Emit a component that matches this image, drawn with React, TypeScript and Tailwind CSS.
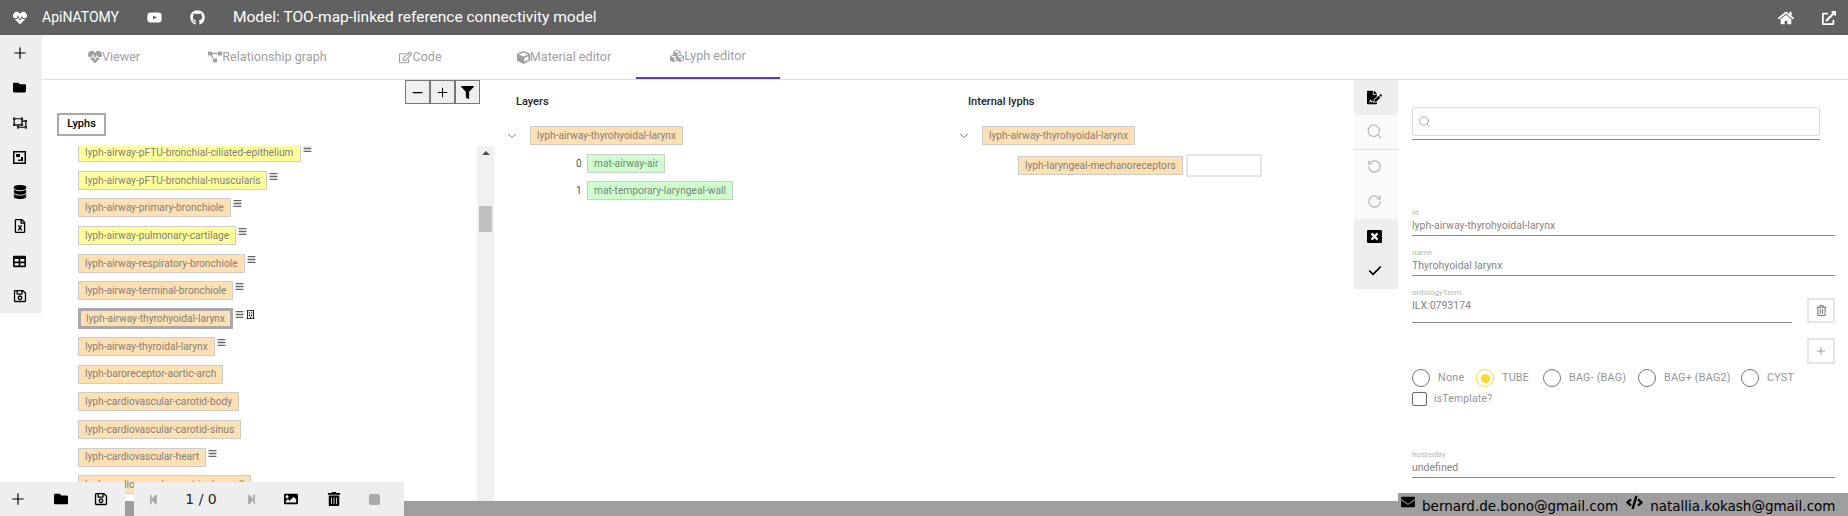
import {
  FaBars, FaCode, FaCube, FaCubes, FaDatabase, FaEnvelope, FaExternalLinkAlt, FaFileSignature, FaFilter,
  FaFolder, FaGithub, FaHeartbeat, FaHome, FaImage, FaProjectDiagram,
  FaStepBackward, FaStepForward, FaTable, FaTrashAlt, FaWindowClose, FaYoutube, FaRegBuilding, FaRegEdit, FaRegFileExcel, FaRegObjectUngroup, FaRegSave, FaRegTrashAlt,
} from "react-icons/fa"
import { Check, ChevronDown, Minus, Plus, RotateCcw, RotateCw, Search } from "lucide-react"
import type { ReactNode } from "react"

const LYPHS = [
    { name: "lyph-airway-pFTU-bronchial-ciliated-epithelium", mat: true, menu: true },
    { name: "lyph-airway-pFTU-bronchial-muscularis", mat: true, menu: true },
    { name: "lyph-airway-primary-bronchiole", menu: true },
    { name: "lyph-airway-pulmonary-cartilage", mat: true, menu: true },
    { name: "lyph-airway-respiratory-bronchiole", menu: true },
    { name: "lyph-airway-terminal-bronchiole", menu: true },
    { name: "lyph-airway-thyrohyoidal-larynx", menu: true, selected: true },
    { name: "lyph-airway-thyroidal-larynx", menu: true },
    { name: "lyph-baroreceptor-aortic-arch" },
    { name: "lyph-cardiovascular-carotid-body" },
    { name: "lyph-cardiovascular-carotid-sinus" },
    { name: "lyph-cardiovascular-heart", menu: true },
    { name: "lyph-cardiovascular-ventricular-wall" },
]

const TABS = [
    { label: "Viewer", icon: <FaHeartbeat size={14} />, w: "w-[144px]" },
    { label: "Relationship graph", icon: <FaProjectDiagram size={14} />, w: "w-[163px]" },
    { label: "Code", icon: <FaRegEdit size={13} />, w: "w-[143px]" },
    { label: "Material editor", icon: <FaCube size={13} />, w: "w-[144px]" },
    { label: "Lyph editor", icon: <FaCubes size={14} />, w: "w-[144px]", active: true },
]

function MapIcon() {
    return (
        <svg width="13" height="13" viewBox="0 0 13 13">
            <rect x="0.75" y="0.75" width="11.5" height="11.5" fill="none" stroke="black" strokeWidth="1.5" />
            <rect x="3" y="3" width="4" height="3" fill="black" />
            <path d="M10 6v4H5V8.5h3V6z" fill="black" />
        </svg>
    )
}

function Chip({ label, green, yellow, className = "" }: { label: string; green?: boolean; yellow?: boolean; className?: string }) {
    const bg = green ? "bg-[#ccffcc]" : yellow ? "bg-[#ffff99]" : "bg-[#ffe0b2]"
    return (
        <span className={`inline-flex items-center whitespace-nowrap text-[10.2px] text-[#808080] ${bg} ${className || "h-[19px] border border-[#ccc] px-[6px]"}`}>
            {label}
        </span>
    )
}

function Field({ label, value, className = "" }: { label: string; value: string; className?: string }) {
    return (
        <div className={`border-b border-[#8a8a8a] ${className}`}>
            <div className="h-[13px] text-[8px] leading-[13px] text-[#b5b5b5]">{label}</div>
            <div className="h-[16px] text-[10.5px] leading-[14px] text-[#858585]">{value}</div>
        </div>
    )
}

function Radio({ label, checked, className = "" }: { label: string; checked?: boolean; className?: string }) {
    return (
        <div className={`flex items-center gap-[8px] ${className}`}>
            <span className={`flex h-[18px] w-[18px] items-center justify-center rounded-full border ${checked ? "border-[#fdd835]" : "border-[#757575]"}`}>
                {checked && <span className="h-[9px] w-[9px] rounded-full bg-[#fdd835]" />}
            </span>
            <span className="text-[10.8px] tracking-[0.2px] text-[#949494]">{label}</span>
        </div>
    )
}

function ToolCell({ children, light, border }: { children: ReactNode; light?: boolean; border?: boolean }) {
    return (
        <div className={`flex h-[34.8px] items-center justify-center pr-[3px] ${light ? "bg-[#fafafa] text-[#b4b4b4]" : "bg-[#eeeeee] text-black"} ${border ? "border-b border-[#ddd]" : ""}`}>
            {children}
        </div>
    )
}

export default function App() {
    return (
        <div className="relative flex h-[516px] w-[1848px] flex-col overflow-hidden bg-white font-['Roboto',sans-serif]">
            {/* Header */}
            <header className="flex h-[35px] shrink-0 items-center bg-[#616161] text-white">
                <FaHeartbeat size={14} className="ml-[13px]" />
                <span className="ml-[15px] text-[14px]">ApiNATOMY</span>
                <FaYoutube size={15} className="ml-[28px]" />
                <FaGithub size={15} className="ml-[28px]" />
                <span className="ml-[28px] text-[15.5px]">Model: TOO-map-linked reference connectivity model</span>
                <FaHome size={16} className="ml-auto" />
                <FaExternalLinkAlt size={14} className="ml-[28px] mr-[12px]" />
            </header>

            <div className="flex min-h-0 flex-1">
                {/* Left toolbar */}
                <aside className="flex h-[278px] w-[42px] shrink-0 flex-col items-center bg-[#eeeeee] pr-[3px] pt-[1px] text-black">
                    {[
                        <Plus size={18} strokeWidth={1.6} />, <FaFolder size={13} />, <FaRegObjectUngroup size={14} />, <MapIcon />,
                        <FaDatabase size={14} />, <FaRegFileExcel size={14} />, <FaTable size={13} />, <FaRegSave size={14} />,
                    ].map((icon, i) => (
                        <div key={i} className="flex h-[34.7px] items-center justify-center">{icon}</div>
                    ))}
                </aside>

                <main className="flex min-w-0 flex-1 flex-col">
                    {/* Tabs */}
                    <nav className="flex h-[45px] shrink-0 border-b border-[#e0e0e0] text-[12.6px] text-[#a0a0a0]">
                        {TABS.map(tab => (
                            <div key={tab.label} className={`flex items-center justify-center ${tab.w} ${tab.active ? "border-b-2 border-[#673ab7]" : ""}`}>
                                {tab.icon}
                                <span>{tab.label}</span>
                            </div>
                        ))}
                    </nav>

                    <div className="flex min-h-0 flex-1">
                        {/* Lyph list */}
                        <section className="relative flex w-[452px] shrink-0 flex-col">
                            <div className="flex h-[24px] justify-end pr-[14px]">
                                {[<Minus size={15} strokeWidth={2} />, <Plus size={15} strokeWidth={1.6} />, <FaFilter size={13} />].map((icon, i) => (
                                    <button key={i} className="flex h-[24px] w-[25px] items-center justify-center border border-[#777] bg-[#efefef] text-black">{icon}</button>
                                ))}
                            </div>
                            <div className="ml-[15px] mt-[9px] flex h-[23px] w-[49px] items-center justify-center border-2 border-[#aaa] text-[11px] font-medium text-black">Lyphs</div>
                            <div className="mt-[10px] flex min-h-0 flex-1">
                                <div className="h-[355px] flex-1 overflow-hidden pl-[36px]">
                                    <div className="-mt-[3px] flex flex-col">
                                        {LYPHS.map(lyph => (
                                            <div key={lyph.name} className="flex h-[27.7px] shrink-0">
                                                <Chip
                                                    label={lyph.name}
                                                    yellow={lyph.mat}
                                                    className={lyph.selected ? "-mt-[1px] h-[21px] border-[3px] border-[#a9a9a9] px-[5px]" : ""}
                                                />
                                                {lyph.menu && <FaBars size={9} className="ml-[2px] mt-[1px] text-[#666]" />}
                                                {lyph.selected && <FaRegBuilding size={9} className="ml-[2px] mt-[1px] text-black" />}
                                            </div>
                                        ))}
                                    </div>
                                </div>
                                <div className="relative h-[355px] w-[17px] shrink-0 bg-[#f0f0f0]">
                                    <div className="absolute left-[2px] top-[60px] h-[26px] w-[13px] bg-[#c1c1c1]" />
                                    <div className="absolute left-[5px] top-[5px] h-0 w-0 border-x-[4px] border-b-[4px] border-x-transparent border-b-[#505050]" />
                                </div>
                            </div>
                        </section>

                        {/* Layers */}
                        <section className="w-[459px] shrink-0 pl-[22px]">
                            <h3 className="mt-[15px] h-[14px] text-[11px] font-medium leading-[14px] text-[#222]">Layers</h3>
                            <div className="mt-[17px] flex items-center">
                                <ChevronDown size={14} strokeWidth={1.5} className="-ml-[11px] mr-[11px] text-[#666]" />
                                <Chip label="lyph-airway-thyrohyoidal-larynx" />
                            </div>
                            <div className="ml-[71px] mt-[9px] flex items-center">
                                <span className="-ml-[11px] w-[11px] text-[10px] text-[#555]">0</span>
                                <Chip label="mat-airway-air" green />
                            </div>
                            <div className="ml-[71px] mt-[8px] flex items-center">
                                <span className="-ml-[11px] w-[11px] text-[10px] text-[#555]">1</span>
                                <Chip label="mat-temporary-laryngeal-wall" green />
                            </div>
                        </section>

                        {/* Internal lyphs */}
                        <section className="flex-1 pl-[15px]">
                            <h3 className="mt-[15px] h-[14px] text-[11px] font-medium leading-[14px] text-[#222]">Internal lyphs</h3>
                            <div className="mt-[17px] flex items-center">
                                <ChevronDown size={14} strokeWidth={1.5} className="-ml-[11px] mr-[11px] text-[#666]" />
                                <Chip label="lyph-airway-thyrohyoidal-larynx" />
                            </div>
                            <div className="ml-[50px] mt-[9px] flex items-center">
                                <Chip label="lyph-laryngeal-mechanoreceptors" />
                                <div className="ml-[3px] h-[23px] w-[76px] border-2 border-[#e6e6e6]" />
                            </div>
                        </section>

                        {/* Editor tools */}
                        <div className="flex h-[209px] w-[44px] shrink-0 flex-col">
                            <ToolCell><FaFileSignature size={15} /></ToolCell>
                            <ToolCell light border><Search size={17} strokeWidth={1.6} /></ToolCell>
                            <ToolCell light><RotateCcw size={15} strokeWidth={1.8} /></ToolCell>
                            <ToolCell light><RotateCw size={15} strokeWidth={1.8} /></ToolCell>
                            <ToolCell><FaWindowClose size={15} /></ToolCell>
                            <ToolCell><Check size={16} strokeWidth={2.6} /></ToolCell>
                        </div>

                        {/* Properties */}
                        <section className="w-[450px] shrink-0 pl-[14px] pr-[13px]">
                            <div className="mr-[15px] mt-[27px] border-b border-[#888] pb-[3px]">
                                <div className="flex h-[29px] items-center rounded-[2px] border border-[#ddd] pl-[5px] text-[#999]">
                                    <Search size={13} strokeWidth={1.5} />
                                </div>
                            </div>
                            <Field label="id" value="lyph-airway-thyrohyoidal-larynx" className="mt-[66px]" />
                            <Field label="name" value="Thyrohyoidal larynx" className="mt-[10px]" />
                            <div className="flex">
                                <Field label="ontologyTerm" value="ILX:0793174" className="mt-[10px] w-[380px]" />
                                <div className="ml-auto mt-[22px] flex h-[25px] w-[28px] items-center justify-center border-2 border-[#e6e6e6] text-[#777]">
                                    <FaRegTrashAlt size={11} />
                                </div>
                            </div>
                            <div className="mt-[15px] flex justify-end">
                                <div className="flex h-[26px] w-[28px] items-center justify-center border-2 border-[#e6e6e6] text-[#999]">
                                    <Plus size={12} strokeWidth={2} />
                                </div>
                            </div>
                            <div className="mt-[5px] flex">
                                <Radio label="None" className="w-[64px]" />
                                <Radio label="TUBE" checked className="w-[67px]" />
                                <Radio label="BAG- (BAG)" className="w-[95px]" />
                                <Radio label="BAG+ (BAG2)" className="w-[103px]" />
                                <Radio label="CYST" />
                            </div>
                            <div className="mt-[4px] flex items-center gap-[7px]">
                                <span className="h-[14px] w-[15px] rounded-[2px] border border-[#666]" />
                                <span className="text-[10.4px] tracking-[0.2px] text-[#949494]">isTemplate?</span>
                            </div>
                            <Field label="hostedBy" value="undefined" className="mt-[41px]" />
                        </section>
                    </div>
                </main>
            </div>

            {/* Bottom toolbars, over the footer */}
            <div className="absolute bottom-0 left-0 h-[15px] w-full bg-[#9e9e9e]" />
            <div className="absolute bottom-0 left-0 flex h-[34px] items-center">
                <div className="flex h-full w-[125px] items-center bg-[#eeeeee] text-black">
                    <Plus size={18} strokeWidth={1.6} className="ml-[9px]" />
                    <FaFolder size={14} className="ml-[27px]" />
                    <FaRegSave size={14} className="ml-[26px]" />
                </div>
                <div className="ml-[9px] flex h-full w-[270px] items-center bg-[#eeeeee]">
                    <FaStepBackward size={11} className="ml-[14px] text-[#aaa]" />
                    <span className="ml-[22px] w-[40px] text-center font-['DejaVu_Sans',sans-serif] text-[14px] text-[#222]">1 / 0</span>
                    <FaStepForward size={11} className="ml-[25px] text-[#aaa]" />
                    <FaImage size={14} className="ml-[27px] text-black" />
                    <FaTrashAlt size={14} className="ml-[29px] text-black" />
                    <div className="ml-[28px] h-[11px] w-[11px] rounded-[2px] bg-[#aaa]" />
                </div>
            </div>

            {/* Contacts */}
            <footer className="absolute bottom-0 right-0 flex h-[23px] w-[450px] items-center bg-[#9e9e9e] pl-[3px] pt-[4px] font-['DejaVu_Sans',sans-serif] text-[13.5px] text-black">
                <FaEnvelope size={14} className="-mt-[9px]" />
                <span className="ml-[7px]">bernard.de.bono@gmail.com</span>
                <FaCode size={17} className="-mt-[9px] ml-[8px]" />
                <span className="ml-[7px]">natallia.kokash@gmail.com</span>
            </footer>
        </div>
    )
}
